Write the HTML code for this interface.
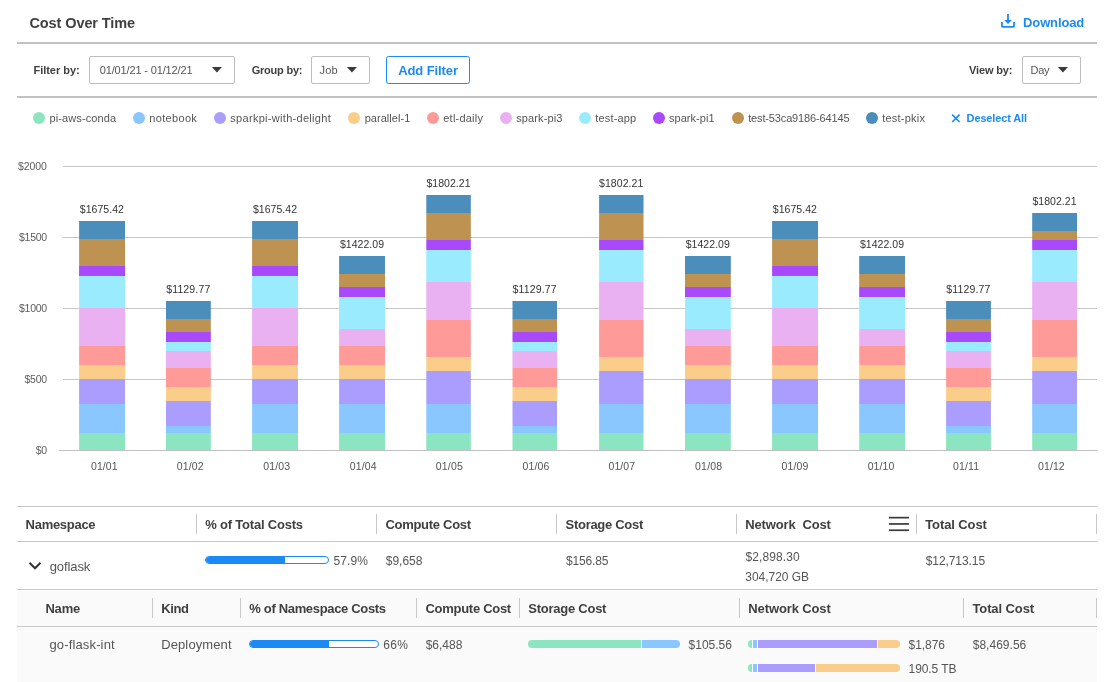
<!DOCTYPE html>
<html lang="en"><head><meta charset="utf-8"><title>Cost Over Time</title>
<style>
html,body{margin:0;padding:0;background:#fff}
body{width:1112px;height:682px;overflow:hidden;position:relative;font-family:"Liberation Sans", sans-serif;-webkit-font-smoothing:antialiased}
#app{position:absolute;left:0;top:0;width:1112px;height:682px;will-change:transform}
.t{position:absolute;white-space:pre;display:block}
.abs{position:absolute}
.hr{position:absolute;left:17px;width:1080px;height:2px;background:#c2c2c2}
.sel{position:absolute;box-sizing:border-box;border:1px solid #bdbdbd;border-radius:2px;background:#fff}
.btn{position:absolute;box-sizing:border-box;border:1px solid #1c8af5;border-radius:2.5px;background:#fff}
.dot{position:absolute;width:12px;height:12px;border-radius:50%;top:112.1px}
.ln{position:absolute;left:17px;width:1080px;height:1px;background:#c8c8c8}
.vs{position:absolute;width:1px;height:20px;background:#c8c8c8}
.pb{position:absolute;box-sizing:border-box;height:8px;border:1px solid #1c8af5;border-radius:4px;background:#fff;overflow:hidden}
.pb i{display:block;height:100%;background:#1c8af5}
.sb{position:absolute;height:7.8px;border-radius:4px;overflow:hidden;background:#fafafa}
.sb i{position:absolute;top:0;height:100%}

</style></head><body><div id="app">
<header>
<div class="hr" style="top:42.3px"></div>
<svg class="abs" style="left:1000px;top:13px" width="16" height="16" viewBox="0 0 16 16"><path d="M7.100 0.900h1.800v6.500h-1.800z" fill="#1c8af5"/><path d="M4.100 7.100h7.800L8 11.100z" fill="#1c8af5"/><path d="M1.950 9.100v3.800a1 1 0 0 0 1 1h10.050a1 1 0 0 0 1-1v-3.800" fill="none" stroke="#1c8af5" stroke-width="1.800" stroke-linejoin="round"/></svg>
<span class="t" style="left:29.5px;top:16.00px;font-size:14.5px;line-height:14.5px;font-weight:700;color:#3f3f3f;letter-spacing:-0.102px">Cost Over Time</span>
<span class="t" style="left:1023.1px;top:16.00px;font-size:13px;line-height:13px;font-weight:700;color:#1c8af5;letter-spacing:-0.139px">Download</span>
</header>
<section class="filters">
<div class="hr" style="top:96px"></div>
<div class="sel" style="left:89px;top:56px;width:146px;height:28px"></div><svg class="abs" style="left:211px;top:67px" width="12" height="7" viewBox="0 0 12 7"><path d="M0.900 0.100h10l-5 5.300z" fill="#3a3a3a"/></svg>
<div class="sel" style="left:311px;top:56px;width:59px;height:28px"></div><svg class="abs" style="left:346px;top:67px" width="12" height="7" viewBox="0 0 12 7"><path d="M0.900 0.100h10l-5 5.300z" fill="#3a3a3a"/></svg>
<div class="btn" style="left:386px;top:56px;width:84px;height:28px"></div>
<div class="sel" style="left:1022px;top:56px;width:59px;height:28px"></div><svg class="abs" style="left:1057px;top:67px" width="12" height="7" viewBox="0 0 12 7"><path d="M0.900 0.100h10l-5 5.300z" fill="#3a3a3a"/></svg>
<span class="t" style="left:33.5px;top:65.00px;font-size:11px;line-height:11px;font-weight:700;color:#3f3f3f;letter-spacing:-0.035px">Filter by:</span>
<span class="t" style="left:99.7px;top:65.00px;font-size:11px;line-height:11px;color:#555;letter-spacing:-0.143px">01/01/21 - 01/12/21</span>
<span class="t" style="left:251.7px;top:65.00px;font-size:11px;line-height:11px;font-weight:700;color:#3f3f3f;letter-spacing:-0.218px">Group by:</span>
<span class="t" style="left:319.6px;top:65.00px;font-size:11px;line-height:11px;color:#555;letter-spacing:0.150px">Job</span>
<span class="t" style="left:398.2px;top:64.00px;font-size:13px;line-height:13px;font-weight:700;color:#1c8af5;letter-spacing:-0.097px">Add Filter</span>
<span class="t" style="left:969.0px;top:65.00px;font-size:11px;line-height:11px;font-weight:700;color:#3f3f3f;letter-spacing:-0.130px">View by:</span>
<span class="t" style="left:1030.6px;top:65.00px;font-size:11px;line-height:11px;color:#555;letter-spacing:-0.387px">Day</span>
</section>
<section class="legend">
<div class="dot" style="left:33px;background:#8ce5c1"></div>
<div class="dot" style="left:133px;background:#8ac6ff"></div>
<div class="dot" style="left:214px;background:#ab9dfd"></div>
<div class="dot" style="left:348.1px;background:#facd8b"></div>
<div class="dot" style="left:427.2px;background:#fe9b99"></div>
<div class="dot" style="left:499.8px;background:#e9b0f2"></div>
<div class="dot" style="left:578.9px;background:#9bebfe"></div>
<div class="dot" style="left:652.7px;background:#a949fc"></div>
<div class="dot" style="left:731.8px;background:#be9250"></div>
<div class="dot" style="left:866.1px;background:#4b8dbb"></div>
<svg class="abs" style="left:950px;top:112px" width="12" height="12" viewBox="0 0 12 12" stroke="#1c8af5" stroke-width="1.7" fill="none"><path d="M2.2 2.600l7.400 7.400M9.600 2.600l-7.400 7.400"/></svg>
<span class="t" style="left:49.4px;top:113.00px;font-size:11px;line-height:11px;color:#555;letter-spacing:0.123px">pi-aws-conda</span>
<span class="t" style="left:149.3px;top:113.00px;font-size:11px;line-height:11px;color:#555;letter-spacing:0.329px">notebook</span>
<span class="t" style="left:230.3px;top:113.00px;font-size:11px;line-height:11px;color:#555;letter-spacing:0.297px">sparkpi-with-delight</span>
<span class="t" style="left:364.7px;top:113.00px;font-size:11px;line-height:11px;color:#555;letter-spacing:0.035px">parallel-1</span>
<span class="t" style="left:443.3px;top:113.00px;font-size:11px;line-height:11px;color:#555;letter-spacing:0.210px">etl-daily</span>
<span class="t" style="left:516.2px;top:113.00px;font-size:11px;line-height:11px;color:#555;letter-spacing:0.117px">spark-pi3</span>
<span class="t" style="left:595.3px;top:113.00px;font-size:11px;line-height:11px;color:#555;letter-spacing:0.156px">test-app</span>
<span class="t" style="left:669.0px;top:113.00px;font-size:11px;line-height:11px;color:#555;letter-spacing:0.039px">spark-pi1</span>
<span class="t" style="left:748.2px;top:113.00px;font-size:11px;line-height:11px;color:#555;letter-spacing:-0.146px">test-53ca9186-64145</span>
<span class="t" style="left:882.2px;top:113.00px;font-size:11px;line-height:11px;color:#555;letter-spacing:0.226px">test-pkix</span>
<span class="t" style="left:966.6px;top:113.00px;font-size:11px;line-height:11px;font-weight:700;color:#1c8af5;letter-spacing:-0.139px">Deselect All</span>
</section>
<section class="chart">
<svg class="abs" style="left:0;top:150px" width="1112" height="340" viewBox="0 150 1112 340">
<rect x="63" y="166" width="1034" height="1" fill="#c8c8c8"/>
<rect x="63" y="237" width="1034" height="1" fill="#c8c8c8"/>
<rect x="63" y="308" width="1034" height="1" fill="#c8c8c8"/>
<rect x="63" y="379" width="1034" height="1" fill="#c8c8c8"/>
<rect x="79.1" y="433" width="45.9" height="17" fill="#8ce5c1"/>
<rect x="79.1" y="404" width="45.9" height="29" fill="#8ac6ff"/>
<rect x="79.1" y="379" width="45.9" height="25" fill="#ab9dfd"/>
<rect x="79.1" y="365" width="45.9" height="14" fill="#facd8b"/>
<rect x="79.1" y="346" width="45.9" height="19" fill="#fe9b99"/>
<rect x="79.1" y="308" width="45.9" height="38" fill="#e9b0f2"/>
<rect x="79.1" y="276" width="45.9" height="32" fill="#9bebfe"/>
<rect x="79.1" y="266" width="45.9" height="10" fill="#a949fc"/>
<rect x="79.1" y="239" width="45.9" height="27" fill="#be9250"/>
<rect x="79.1" y="221" width="45.9" height="18" fill="#4b8dbb"/>
<rect x="166.0" y="433" width="44.8" height="17" fill="#8ce5c1"/>
<rect x="166.0" y="426" width="44.8" height="7" fill="#8ac6ff"/>
<rect x="166.0" y="401" width="44.8" height="25" fill="#ab9dfd"/>
<rect x="166.0" y="387" width="44.8" height="14" fill="#facd8b"/>
<rect x="166.0" y="368" width="44.8" height="19" fill="#fe9b99"/>
<rect x="166.0" y="351" width="44.8" height="17" fill="#e9b0f2"/>
<rect x="166.0" y="342" width="44.8" height="9" fill="#9bebfe"/>
<rect x="166.0" y="332" width="44.8" height="10" fill="#a949fc"/>
<rect x="166.0" y="319" width="44.8" height="13" fill="#be9250"/>
<rect x="166.0" y="301" width="44.8" height="18" fill="#4b8dbb"/>
<rect x="252.1" y="433" width="45.9" height="17" fill="#8ce5c1"/>
<rect x="252.1" y="404" width="45.9" height="29" fill="#8ac6ff"/>
<rect x="252.1" y="379" width="45.9" height="25" fill="#ab9dfd"/>
<rect x="252.1" y="365" width="45.9" height="14" fill="#facd8b"/>
<rect x="252.1" y="346" width="45.9" height="19" fill="#fe9b99"/>
<rect x="252.1" y="308" width="45.9" height="38" fill="#e9b0f2"/>
<rect x="252.1" y="276" width="45.9" height="32" fill="#9bebfe"/>
<rect x="252.1" y="266" width="45.9" height="10" fill="#a949fc"/>
<rect x="252.1" y="239" width="45.9" height="27" fill="#be9250"/>
<rect x="252.1" y="221" width="45.9" height="18" fill="#4b8dbb"/>
<rect x="339.1" y="433" width="45.9" height="17" fill="#8ce5c1"/>
<rect x="339.1" y="404" width="45.9" height="29" fill="#8ac6ff"/>
<rect x="339.1" y="379" width="45.9" height="25" fill="#ab9dfd"/>
<rect x="339.1" y="365" width="45.9" height="14" fill="#facd8b"/>
<rect x="339.1" y="346" width="45.9" height="19" fill="#fe9b99"/>
<rect x="339.1" y="329" width="45.9" height="17" fill="#e9b0f2"/>
<rect x="339.1" y="297" width="45.9" height="32" fill="#9bebfe"/>
<rect x="339.1" y="287" width="45.9" height="10" fill="#a949fc"/>
<rect x="339.1" y="274" width="45.9" height="13" fill="#be9250"/>
<rect x="339.1" y="256" width="45.9" height="18" fill="#4b8dbb"/>
<rect x="426.3" y="433" width="44.5" height="17" fill="#8ce5c1"/>
<rect x="426.3" y="404" width="44.5" height="29" fill="#8ac6ff"/>
<rect x="426.3" y="371" width="44.5" height="33" fill="#ab9dfd"/>
<rect x="426.3" y="357" width="44.5" height="14" fill="#facd8b"/>
<rect x="426.3" y="320" width="44.5" height="37" fill="#fe9b99"/>
<rect x="426.3" y="282" width="44.5" height="38" fill="#e9b0f2"/>
<rect x="426.3" y="250" width="44.5" height="32" fill="#9bebfe"/>
<rect x="426.3" y="240" width="44.5" height="10" fill="#a949fc"/>
<rect x="426.3" y="213" width="44.5" height="27" fill="#be9250"/>
<rect x="426.3" y="195" width="44.5" height="18" fill="#4b8dbb"/>
<rect x="512.5" y="433" width="44.5" height="17" fill="#8ce5c1"/>
<rect x="512.5" y="426" width="44.5" height="7" fill="#8ac6ff"/>
<rect x="512.5" y="401" width="44.5" height="25" fill="#ab9dfd"/>
<rect x="512.5" y="387" width="44.5" height="14" fill="#facd8b"/>
<rect x="512.5" y="368" width="44.5" height="19" fill="#fe9b99"/>
<rect x="512.5" y="351" width="44.5" height="17" fill="#e9b0f2"/>
<rect x="512.5" y="342" width="44.5" height="9" fill="#9bebfe"/>
<rect x="512.5" y="332" width="44.5" height="10" fill="#a949fc"/>
<rect x="512.5" y="319" width="44.5" height="13" fill="#be9250"/>
<rect x="512.5" y="301" width="44.5" height="18" fill="#4b8dbb"/>
<rect x="599.1" y="433" width="44.4" height="17" fill="#8ce5c1"/>
<rect x="599.1" y="404" width="44.4" height="29" fill="#8ac6ff"/>
<rect x="599.1" y="371" width="44.4" height="33" fill="#ab9dfd"/>
<rect x="599.1" y="357" width="44.4" height="14" fill="#facd8b"/>
<rect x="599.1" y="320" width="44.4" height="37" fill="#fe9b99"/>
<rect x="599.1" y="282" width="44.4" height="38" fill="#e9b0f2"/>
<rect x="599.1" y="250" width="44.4" height="32" fill="#9bebfe"/>
<rect x="599.1" y="240" width="44.4" height="10" fill="#a949fc"/>
<rect x="599.1" y="213" width="44.4" height="27" fill="#be9250"/>
<rect x="599.1" y="195" width="44.4" height="18" fill="#4b8dbb"/>
<rect x="685.0" y="433" width="45.8" height="17" fill="#8ce5c1"/>
<rect x="685.0" y="404" width="45.8" height="29" fill="#8ac6ff"/>
<rect x="685.0" y="379" width="45.8" height="25" fill="#ab9dfd"/>
<rect x="685.0" y="365" width="45.8" height="14" fill="#facd8b"/>
<rect x="685.0" y="346" width="45.8" height="19" fill="#fe9b99"/>
<rect x="685.0" y="329" width="45.8" height="17" fill="#e9b0f2"/>
<rect x="685.0" y="297" width="45.8" height="32" fill="#9bebfe"/>
<rect x="685.0" y="287" width="45.8" height="10" fill="#a949fc"/>
<rect x="685.0" y="274" width="45.8" height="13" fill="#be9250"/>
<rect x="685.0" y="256" width="45.8" height="18" fill="#4b8dbb"/>
<rect x="772.1" y="433" width="45.9" height="17" fill="#8ce5c1"/>
<rect x="772.1" y="404" width="45.9" height="29" fill="#8ac6ff"/>
<rect x="772.1" y="379" width="45.9" height="25" fill="#ab9dfd"/>
<rect x="772.1" y="365" width="45.9" height="14" fill="#facd8b"/>
<rect x="772.1" y="346" width="45.9" height="19" fill="#fe9b99"/>
<rect x="772.1" y="308" width="45.9" height="38" fill="#e9b0f2"/>
<rect x="772.1" y="276" width="45.9" height="32" fill="#9bebfe"/>
<rect x="772.1" y="266" width="45.9" height="10" fill="#a949fc"/>
<rect x="772.1" y="239" width="45.9" height="27" fill="#be9250"/>
<rect x="772.1" y="221" width="45.9" height="18" fill="#4b8dbb"/>
<rect x="859.2" y="433" width="45.8" height="17" fill="#8ce5c1"/>
<rect x="859.2" y="404" width="45.8" height="29" fill="#8ac6ff"/>
<rect x="859.2" y="379" width="45.8" height="25" fill="#ab9dfd"/>
<rect x="859.2" y="365" width="45.8" height="14" fill="#facd8b"/>
<rect x="859.2" y="346" width="45.8" height="19" fill="#fe9b99"/>
<rect x="859.2" y="329" width="45.8" height="17" fill="#e9b0f2"/>
<rect x="859.2" y="297" width="45.8" height="32" fill="#9bebfe"/>
<rect x="859.2" y="287" width="45.8" height="10" fill="#a949fc"/>
<rect x="859.2" y="274" width="45.8" height="13" fill="#be9250"/>
<rect x="859.2" y="256" width="45.8" height="18" fill="#4b8dbb"/>
<rect x="946.1" y="433" width="44.8" height="17" fill="#8ce5c1"/>
<rect x="946.1" y="426" width="44.8" height="7" fill="#8ac6ff"/>
<rect x="946.1" y="401" width="44.8" height="25" fill="#ab9dfd"/>
<rect x="946.1" y="387" width="44.8" height="14" fill="#facd8b"/>
<rect x="946.1" y="368" width="44.8" height="19" fill="#fe9b99"/>
<rect x="946.1" y="351" width="44.8" height="17" fill="#e9b0f2"/>
<rect x="946.1" y="342" width="44.8" height="9" fill="#9bebfe"/>
<rect x="946.1" y="332" width="44.8" height="10" fill="#a949fc"/>
<rect x="946.1" y="319" width="44.8" height="13" fill="#be9250"/>
<rect x="946.1" y="301" width="44.8" height="18" fill="#4b8dbb"/>
<rect x="1032.2" y="433" width="44.8" height="17" fill="#8ce5c1"/>
<rect x="1032.2" y="404" width="44.8" height="29" fill="#8ac6ff"/>
<rect x="1032.2" y="371" width="44.8" height="33" fill="#ab9dfd"/>
<rect x="1032.2" y="357" width="44.8" height="14" fill="#facd8b"/>
<rect x="1032.2" y="320" width="44.8" height="37" fill="#fe9b99"/>
<rect x="1032.2" y="282" width="44.8" height="38" fill="#e9b0f2"/>
<rect x="1032.2" y="250" width="44.8" height="32" fill="#9bebfe"/>
<rect x="1032.2" y="240" width="44.8" height="10" fill="#a949fc"/>
<rect x="1032.2" y="231" width="44.8" height="9" fill="#be9250"/>
<rect x="1032.2" y="213" width="44.8" height="18" fill="#4b8dbb"/>
<rect x="59" y="450" width="1038" height="1" fill="#c0c0c0"/>
</svg>
<span class="t" style="left:18.0px;top:161.00px;font-size:10.5px;line-height:10.5px;color:#5c5c5c;letter-spacing:-0.061px">$2000</span>
<span class="t" style="left:19.0px;top:232.00px;font-size:10.5px;line-height:10.5px;color:#5c5c5c;letter-spacing:-0.261px">$1500</span>
<span class="t" style="left:19.0px;top:303.00px;font-size:10.5px;line-height:10.5px;color:#5c5c5c;letter-spacing:-0.261px">$1000</span>
<span class="t" style="left:24.5px;top:374.00px;font-size:10.5px;line-height:10.5px;color:#5c5c5c;letter-spacing:-0.240px">$500</span>
<span class="t" style="left:35.8px;top:445.00px;font-size:10.5px;line-height:10.5px;color:#5c5c5c;letter-spacing:-0.294px">$0</span>
<span class="t" style="left:79.8px;top:204.00px;font-size:10.5px;line-height:10.5px;color:#333;letter-spacing:0.050px">$1675.42</span>
<span class="t" style="left:91.0px;top:461.00px;font-size:10.5px;line-height:10.5px;color:#555;letter-spacing:0.064px">01/01</span>
<span class="t" style="left:166.2px;top:284.00px;font-size:10.5px;line-height:10.5px;color:#333;letter-spacing:0.148px">$1129.77</span>
<span class="t" style="left:176.8px;top:461.00px;font-size:10.5px;line-height:10.5px;color:#555;letter-spacing:0.144px">01/02</span>
<span class="t" style="left:252.9px;top:204.00px;font-size:10.5px;line-height:10.5px;color:#333;letter-spacing:0.050px">$1675.42</span>
<span class="t" style="left:263.2px;top:461.00px;font-size:10.5px;line-height:10.5px;color:#555;letter-spacing:0.144px">01/03</span>
<span class="t" style="left:339.9px;top:239.00px;font-size:10.5px;line-height:10.5px;color:#333;letter-spacing:0.050px">$1422.09</span>
<span class="t" style="left:349.7px;top:461.00px;font-size:10.5px;line-height:10.5px;color:#555;letter-spacing:0.144px">01/04</span>
<span class="t" style="left:426.4px;top:178.00px;font-size:10.5px;line-height:10.5px;color:#333;letter-spacing:0.050px">$1802.21</span>
<span class="t" style="left:435.8px;top:461.00px;font-size:10.5px;line-height:10.5px;color:#555;letter-spacing:0.184px">01/05</span>
<span class="t" style="left:512.5px;top:284.00px;font-size:10.5px;line-height:10.5px;color:#333;letter-spacing:0.148px">$1129.77</span>
<span class="t" style="left:522.5px;top:461.00px;font-size:10.5px;line-height:10.5px;color:#555;letter-spacing:0.124px">01/06</span>
<span class="t" style="left:599.1px;top:178.00px;font-size:10.5px;line-height:10.5px;color:#333;letter-spacing:0.050px">$1802.21</span>
<span class="t" style="left:608.5px;top:461.00px;font-size:10.5px;line-height:10.5px;color:#555;letter-spacing:0.084px">01/07</span>
<span class="t" style="left:685.7px;top:239.00px;font-size:10.5px;line-height:10.5px;color:#333;letter-spacing:0.050px">$1422.09</span>
<span class="t" style="left:695.1px;top:461.00px;font-size:10.5px;line-height:10.5px;color:#555;letter-spacing:0.184px">01/08</span>
<span class="t" style="left:772.8px;top:204.00px;font-size:10.5px;line-height:10.5px;color:#333;letter-spacing:0.050px">$1675.42</span>
<span class="t" style="left:781.5px;top:461.00px;font-size:10.5px;line-height:10.5px;color:#555;letter-spacing:0.124px">01/09</span>
<span class="t" style="left:859.9px;top:239.00px;font-size:10.5px;line-height:10.5px;color:#333;letter-spacing:0.050px">$1422.09</span>
<span class="t" style="left:867.7px;top:461.00px;font-size:10.5px;line-height:10.5px;color:#555;letter-spacing:0.064px">01/10</span>
<span class="t" style="left:946.3px;top:284.00px;font-size:10.5px;line-height:10.5px;color:#333;letter-spacing:0.148px">$1129.77</span>
<span class="t" style="left:953.0px;top:461.00px;font-size:10.5px;line-height:10.5px;color:#555;letter-spacing:0.140px">01/11</span>
<span class="t" style="left:1032.4px;top:196.00px;font-size:10.5px;line-height:10.5px;color:#333;letter-spacing:0.050px">$1802.21</span>
<span class="t" style="left:1038.1px;top:461.00px;font-size:10.5px;line-height:10.5px;color:#555;letter-spacing:0.084px">01/12</span>
</section>
<section class="table">
<div class="ln" style="top:506px"></div>
<div class="ln" style="top:541px"></div>
<div class="abs" style="left:17px;top:591px;width:1080px;height:91px;background:#fafafa"></div>
<div class="ln" style="top:589px"></div>
<div class="ln" style="top:626px"></div>
<div class="vs" style="left:196px;top:514px"></div>
<div class="vs" style="left:376px;top:514px"></div>
<div class="vs" style="left:556px;top:514px"></div>
<div class="vs" style="left:736px;top:514px"></div>
<div class="vs" style="left:916px;top:514px"></div>
<div class="vs" style="left:1096px;top:514px"></div>
<div class="vs" style="left:152px;top:598px"></div>
<div class="vs" style="left:240px;top:598px"></div>
<div class="vs" style="left:416px;top:598px"></div>
<div class="vs" style="left:519px;top:598px"></div>
<div class="vs" style="left:739px;top:598px"></div>
<div class="vs" style="left:963px;top:598px"></div>
<div class="vs" style="left:1096px;top:598px"></div>
<svg class="abs" style="left:888px;top:516px" width="22" height="16" viewBox="0 0 22 16" fill="#3a3a3a"><rect x="1" y="0.800" width="20" height="1.700"/><rect x="1" y="7.100" width="20" height="1.700"/><rect x="1" y="13.400" width="20" height="1.700"/></svg>
<svg class="abs" style="left:28px;top:561px" width="15" height="10" viewBox="0 0 15 10" fill="none" stroke="#333" stroke-width="2"><path d="M1.500 1.800l5.500 5.500 5.500-5.500"/></svg>
<div class="pb" style="left:205px;top:555.8px;width:124px"><i style="width:79.400px"></i></div>
<div class="pb" style="left:249.2px;top:640.3px;width:129.600px"><i style="width:79.100px"></i></div>
<div class="sb" style="left:528px;top:640.4px;width:152.2px"><i style="left:0.0px;width:112.7px;background:#8ce5c1"></i><i style="left:113.9px;width:38.3px;background:#8ac6ff"></i></div>
<div class="sb" style="left:748px;top:640.4px;width:152.2px"><i style="left:0.0px;width:4.4px;background:#8ce5c1"></i><i style="left:5.1px;width:4.1px;background:#8ac6ff"></i><i style="left:9.9px;width:119.1px;background:#ab9dfd"></i><i style="left:130.0px;width:22.2px;background:#facd8b"></i></div>
<div class="sb" style="left:748px;top:664.2px;width:152.2px"><i style="left:0.0px;width:4.4px;background:#8ce5c1"></i><i style="left:5.1px;width:4.1px;background:#8ac6ff"></i><i style="left:9.9px;width:57.2px;background:#ab9dfd"></i><i style="left:68.1px;width:84.1px;background:#facd8b"></i></div>
<span class="t" style="left:25.6px;top:518.00px;font-size:13px;line-height:13px;font-weight:700;color:#3f3f3f;letter-spacing:-0.287px">Namespace</span>
<span class="t" style="left:205.2px;top:518.00px;font-size:13px;line-height:13px;font-weight:700;color:#3f3f3f;letter-spacing:-0.198px">% of Total Costs</span>
<span class="t" style="left:385.4px;top:518.00px;font-size:13px;line-height:13px;font-weight:700;color:#3f3f3f;letter-spacing:-0.279px">Compute Cost</span>
<span class="t" style="left:565.6px;top:518.00px;font-size:13px;line-height:13px;font-weight:700;color:#3f3f3f;letter-spacing:-0.292px">Storage Cost</span>
<span class="t" style="left:745.3px;top:518.00px;font-size:13px;line-height:13px;font-weight:700;color:#3f3f3f;letter-spacing:-0.154px">Network  Cost</span>
<span class="t" style="left:925.2px;top:518.00px;font-size:13px;line-height:13px;font-weight:700;color:#3f3f3f;letter-spacing:-0.099px">Total Cost</span>
<span class="t" style="left:49.7px;top:560.00px;font-size:13px;line-height:13px;color:#555;letter-spacing:-0.086px">goflask</span>
<span class="t" style="left:333.4px;top:555.00px;font-size:12px;line-height:12px;color:#555;letter-spacing:0.134px">57.9%</span>
<span class="t" style="left:385.7px;top:555.00px;font-size:12px;line-height:12px;color:#555;letter-spacing:0.016px">$9,658</span>
<span class="t" style="left:565.9px;top:555.00px;font-size:12px;line-height:12px;color:#555;letter-spacing:-0.142px">$156.85</span>
<span class="t" style="left:745.6px;top:551.00px;font-size:12px;line-height:12px;color:#555;letter-spacing:0.090px">$2,898.30</span>
<span class="t" style="left:745.3px;top:571.00px;font-size:12px;line-height:12px;color:#555;letter-spacing:-0.026px">304,720 GB</span>
<span class="t" style="left:925.7px;top:555.00px;font-size:12px;line-height:12px;color:#555;letter-spacing:-0.076px">$12,713.15</span>
<span class="t" style="left:45.4px;top:602.00px;font-size:13px;line-height:13px;font-weight:700;color:#3f3f3f;letter-spacing:-0.180px">Name</span>
<span class="t" style="left:161.2px;top:602.00px;font-size:13px;line-height:13px;font-weight:700;color:#3f3f3f;letter-spacing:-0.398px">Kind</span>
<span class="t" style="left:249.3px;top:602.00px;font-size:13px;line-height:13px;font-weight:700;color:#3f3f3f;letter-spacing:-0.333px">% of Namespace Costs</span>
<span class="t" style="left:425.5px;top:602.00px;font-size:13px;line-height:13px;font-weight:700;color:#3f3f3f;letter-spacing:-0.287px">Compute Cost</span>
<span class="t" style="left:528.3px;top:602.00px;font-size:13px;line-height:13px;font-weight:700;color:#3f3f3f;letter-spacing:-0.251px">Storage Cost</span>
<span class="t" style="left:748.3px;top:602.00px;font-size:13px;line-height:13px;font-weight:700;color:#3f3f3f;letter-spacing:-0.116px">Network Cost</span>
<span class="t" style="left:972.4px;top:602.00px;font-size:13px;line-height:13px;font-weight:700;color:#3f3f3f;letter-spacing:-0.089px">Total Cost</span>
<span class="t" style="left:49.4px;top:638.00px;font-size:13px;line-height:13px;color:#555;letter-spacing:0.152px">go-flask-int</span>
<span class="t" style="left:161.2px;top:638.00px;font-size:13px;line-height:13px;color:#555;letter-spacing:0.113px">Deployment</span>
<span class="t" style="left:383.3px;top:639.00px;font-size:12px;line-height:12px;color:#555;letter-spacing:0.256px">66%</span>
<span class="t" style="left:425.7px;top:639.00px;font-size:12px;line-height:12px;color:#555;letter-spacing:-0.017px">$6,488</span>
<span class="t" style="left:688.5px;top:639.00px;font-size:12px;line-height:12px;color:#555;letter-spacing:0.016px">$105.56</span>
<span class="t" style="left:908.6px;top:639.00px;font-size:12px;line-height:12px;color:#555;letter-spacing:-0.067px">$1,876</span>
<span class="t" style="left:908.6px;top:663.00px;font-size:12px;line-height:12px;color:#555;letter-spacing:-0.086px">190.5 TB</span>
<span class="t" style="left:972.7px;top:639.00px;font-size:12px;line-height:12px;color:#555;letter-spacing:0.023px">$8,469.56</span>
</section>
</div></body></html>
